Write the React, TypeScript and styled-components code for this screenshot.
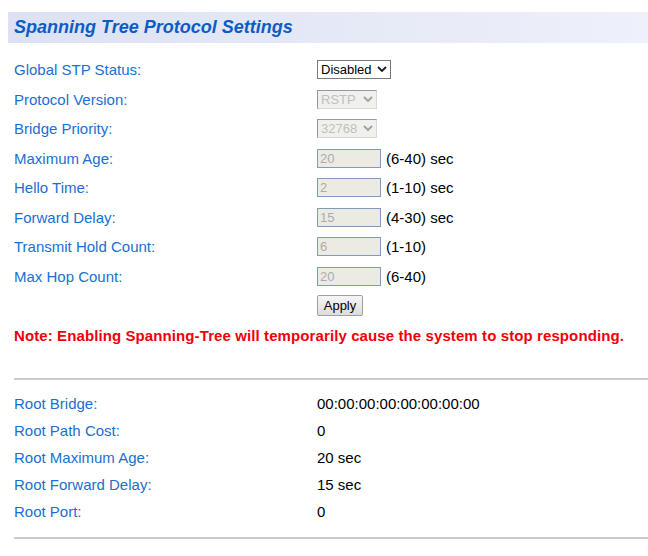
import React from 'react';
import styled, { createGlobalStyle } from 'styled-components';

const Global = createGlobalStyle`
  body {
    margin: 12px 0 0 8px;
    background: #fff;
    font-family: "Liberation Sans", Arial, sans-serif;
  }
`;

const Page = styled.div`
  width: 640px;
`;

const TitleBar = styled.div`
  height: 31px;
  display: flex;
  align-items: center;
  padding-left: 6px;
  background: linear-gradient(to right, #dce2f3, #eef0fa);
`;

const Title = styled.h1`
  margin: 0;
  font-size: 18px;
  font-weight: bold;
  font-style: italic;
  color: #0c5cc6;
`;

const Form = styled.div`
  display: grid;
  grid-template-columns: 303px 1fr;
  grid-auto-rows: 29.5px;
  align-items: center;
  padding: 12px 0 0 6px;
`;

const Label = styled.div`
  font-size: 15px;
  color: #1a6fd0;
`;

const Field = styled.div`
  display: flex;
  align-items: center;
  gap: 5px;
  font-size: 15px;
  color: #000;
`;

const SelectWrap = styled.span<{ $w: number }>`
  position: relative;
  display: inline-flex;
  width: ${p => p.$w}px;
  height: 19px;
`;

const Select = styled.select<{ $off?: boolean }>`
  appearance: none;
  width: 100%;
  height: 100%;
  margin: 0;
  padding: 0 0 0 3px;
  font-family: "Liberation Sans", Arial, sans-serif;
  font-size: 13px;
  color: ${p => (p.$off ? '#a5a5a5' : '#000')};
  background: ${p => (p.$off ? '#ebebe4' : '#fff')};
  border: 1px solid ${p => (p.$off ? '#c8c8c4' : '#7a7a7a')};
  border-left-color: ${p => (p.$off ? '#6d6d6d' : '#7a7a7a')};
  border-top-color: ${p => (p.$off ? '#6d6d6d' : '#7a7a7a')};
  border-radius: 0;
  outline: none;
`;

const Chevron = styled.svg`
  position: absolute;
  right: 4px;
  top: 6px;
  pointer-events: none;
`;

const TextBox = styled.input`
  box-sizing: border-box;
  width: 64px;
  height: 19px;
  margin: 0;
  padding: 0 0 0 2px;
  font-family: "Liberation Sans", Arial, sans-serif;
  font-size: 13px;
  color: #ababab;
  background: #ebebe4;
  border: 1px solid #7f9db9;
`;

const Button = styled.button`
  height: 21px;
  width: 46px;
  padding: 0;
  font-family: "Liberation Sans", Arial, sans-serif;
  font-size: 13px;
  color: #000;
  background: linear-gradient(#f6f6f6, #dcdcdc);
  border: 1px solid #a0a0a0;
  border-radius: 2px;
`;

const Note = styled.div`
  padding: 0 0 0 6px;
  height: 29.5px;
  display: flex;
  align-items: center;
  font-size: 15px;
  font-weight: bold;
  letter-spacing: 0.1px;
  color: #f0000a;
`;

const Rule = styled.hr<{ $top: number }>`
  margin: ${p => p.$top}px 0 0 6px;
  border: 0;
  height: 2px;
  background: #cbcbcb;
`;

const Status = styled.div`
  display: grid;
  grid-template-columns: 303px 1fr;
  grid-auto-rows: 27px;
  align-items: center;
  padding: 10px 0 0 6px;
`;

const Value = styled.div`
  font-size: 15px;
  color: #000;
`;

const Arrow = ({ color }: { color: string }) => (
  <Chevron width="10" height="7" viewBox="0 0 10 7">
    <path d="M1 1 L5 5 L9 1" fill="none" stroke={color} strokeWidth="1.8" />
  </Chevron>
);

const numeric = [
  { label: 'Maximum Age:', value: '20', range: '(6-40) sec' },
  { label: 'Hello Time:', value: '2', range: '(1-10) sec' },
  { label: 'Forward Delay:', value: '15', range: '(4-30) sec' },
  { label: 'Transmit Hold Count:', value: '6', range: '(1-10)' },
  { label: 'Max Hop Count:', value: '20', range: '(6-40)' },
];

const root = [
  { label: 'Root Bridge:', value: '00:00:00:00:00:00:00:00' },
  { label: 'Root Path Cost:', value: '0' },
  { label: 'Root Maximum Age:', value: '20 sec' },
  { label: 'Root Forward Delay:', value: '15 sec' },
  { label: 'Root Port:', value: '0' },
];

export default function App() {
  return (
    <Page>
      <Global />
      <TitleBar>
        <Title>Spanning Tree Protocol Settings</Title>
      </TitleBar>

      <Form>
        <Label>Global STP Status:</Label>
        <Field>
          <SelectWrap $w={74}>
            <Select defaultValue="Disabled">
              <option>Disabled</option>
              <option>Enabled</option>
            </Select>
            <Arrow color="#1a1a1a" />
          </SelectWrap>
        </Field>

        <Label>Protocol Version:</Label>
        <Field>
          <SelectWrap $w={60}>
            <Select $off disabled defaultValue="RSTP">
              <option>RSTP</option>
            </Select>
            <Arrow color="#a0a0a0" />
          </SelectWrap>
        </Field>

        <Label>Bridge Priority:</Label>
        <Field>
          <SelectWrap $w={60}>
            <Select $off disabled defaultValue="32768">
              <option>32768</option>
            </Select>
            <Arrow color="#a0a0a0" />
          </SelectWrap>
        </Field>

        {numeric.map(n => (
          <React.Fragment key={n.label}>
            <Label>{n.label}</Label>
            <Field>
              <TextBox disabled defaultValue={n.value} />
              <span>{n.range}</span>
            </Field>
          </React.Fragment>
        ))}

        <span />
        <Field>
          <Button>Apply</Button>
        </Field>
      </Form>

      <Note>Note: Enabling Spanning-Tree will temporarily cause the system to stop responding.</Note>

      <Rule $top={28} />

      <Status>
        {root.map(r => (
          <React.Fragment key={r.label}>
            <Label>{r.label}</Label>
            <Value>{r.value}</Value>
          </React.Fragment>
        ))}
      </Status>

      <Rule $top={12} />
    </Page>
  );
}
